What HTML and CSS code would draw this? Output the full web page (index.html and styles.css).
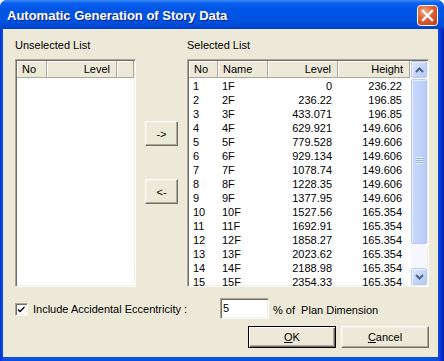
FILE: index.html
```html
<!DOCTYPE html>
<html lang="en">
<head>
  <meta charset="UTF-8">
  <title>Automatic Generation of Story Data</title>
  <link rel="stylesheet" href="styles.css">
</head>
<body>

  <div class="window">
    <!-- Title bar -->
    <div class="titlebar">
      <span class="title">Automatic Generation of Story Data</span>
      <button class="close-btn" aria-label="Close">
        <svg width="21" height="21" viewBox="0 0 21 21">
          <defs>
            <radialGradient id="closeFill" cx="35%" cy="30%" r="80%">
              <stop offset="0" stop-color="#f0a88a"/>
              <stop offset="0.45" stop-color="#e0673c"/>
              <stop offset="1" stop-color="#c0421c"/>
            </radialGradient>
          </defs>
          <rect x="0.5" y="0.5" width="20" height="20" rx="3" fill="url(#closeFill)" stroke="#ffffff"/>
          <path d="M6 6 L15 15 M15 6 L6 15" stroke="#ffffff" stroke-width="2.4" stroke-linecap="square"/>
        </svg>
      </button>
    </div>

    <div class="client">
      <div class="lists">
        <!-- Unselected list -->
        <div class="group group-unselected">
          <div class="group-label">Unselected List</div>
          <div class="listbox">
            <div class="list-head cols-un">
              <div class="hcell">No</div>
              <div class="hcell right">Level</div>
              <div class="hcell"></div>
            </div>
          </div>
        </div>

        <!-- Move buttons -->
        <div class="movers">
          <button class="btn move-btn">-&gt;</button>
          <button class="btn move-btn">&lt;-</button>
        </div>

        <!-- Selected list -->
        <div class="group group-selected">
          <div class="group-label">Selected List</div>
          <div class="listbox">
            <div class="list-inner">
              <div class="list-main">
                <div class="list-head cols-sel">
                  <div class="hcell">No</div>
                  <div class="hcell">Name</div>
                  <div class="hcell right">Level</div>
                  <div class="hcell right">Height</div>
                </div>
                <div class="rows">
                  <div class="row cols-sel"><span>1</span><span>1F</span><span class="right">0</span><span class="right">236.22</span></div>
                  <div class="row cols-sel"><span>2</span><span>2F</span><span class="right">236.22</span><span class="right">196.85</span></div>
                  <div class="row cols-sel"><span>3</span><span>3F</span><span class="right">433.071</span><span class="right">196.85</span></div>
                  <div class="row cols-sel"><span>4</span><span>4F</span><span class="right">629.921</span><span class="right">149.606</span></div>
                  <div class="row cols-sel"><span>5</span><span>5F</span><span class="right">779.528</span><span class="right">149.606</span></div>
                  <div class="row cols-sel"><span>6</span><span>6F</span><span class="right">929.134</span><span class="right">149.606</span></div>
                  <div class="row cols-sel"><span>7</span><span>7F</span><span class="right">1078.74</span><span class="right">149.606</span></div>
                  <div class="row cols-sel"><span>8</span><span>8F</span><span class="right">1228.35</span><span class="right">149.606</span></div>
                  <div class="row cols-sel"><span>9</span><span>9F</span><span class="right">1377.95</span><span class="right">149.606</span></div>
                  <div class="row cols-sel"><span>10</span><span>10F</span><span class="right">1527.56</span><span class="right">165.354</span></div>
                  <div class="row cols-sel"><span>11</span><span>11F</span><span class="right">1692.91</span><span class="right">165.354</span></div>
                  <div class="row cols-sel"><span>12</span><span>12F</span><span class="right">1858.27</span><span class="right">165.354</span></div>
                  <div class="row cols-sel"><span>13</span><span>13F</span><span class="right">2023.62</span><span class="right">165.354</span></div>
                  <div class="row cols-sel"><span>14</span><span>14F</span><span class="right">2188.98</span><span class="right">165.354</span></div>
                  <div class="row cols-sel"><span>15</span><span>15F</span><span class="right">2354.33</span><span class="right">165.354</span></div>
                </div>
              </div>

              <!-- XP style scrollbar -->
              <div class="scrollbar">
                <div class="sb-btn">
                  <svg width="9" height="6" viewBox="0 0 9 6"><path d="M1 5 L4.5 1.5 L8 5" fill="none" stroke="#4d6185" stroke-width="2"/></svg>
                </div>
                <div class="sb-thumb">
                  <div class="grip"></div>
                </div>
                <div class="sb-track"></div>
                <div class="sb-btn">
                  <svg width="9" height="6" viewBox="0 0 9 6"><path d="M1 1 L4.5 4.5 L8 1" fill="none" stroke="#4d6185" stroke-width="2"/></svg>
                </div>
              </div>
            </div>
          </div>
        </div>
      </div>

      <!-- Eccentricity option -->
      <div class="options">
        <span class="checkbox">
          <svg width="9" height="9" viewBox="0 0 9 9"><path d="M1 3.5 L3 5.5 L7.5 1 L7.5 3 L3 7.5 L1 5.5 Z" fill="#000"/></svg>
        </span>
        <span class="check-label">Include Accidental Eccentricity :</span>
        <span class="textbox">5</span>
        <span class="unit">% of&nbsp; Plan Dimension</span>
      </div>

      <!-- Dialog buttons -->
      <div class="actions">
        <button class="btn action-btn default-btn"><u>O</u>K</button>
        <button class="btn action-btn"><u>C</u>ancel</button>
      </div>
    </div>
  </div>

</body>
</html>
```

FILE: styles.css
```css
/* Reset and basic styles */
* {
  margin: 0;
  padding: 0;
  box-sizing: border-box;
}

body {
  width: 444px;
  height: 361px;
  overflow: hidden;
  background: #ffffff;
  font-family: "Liberation Sans", Arial, sans-serif;
  font-size: 11px;
  color: #000;
}

/* Window frame */
.window {
  width: 444px;
  height: 361px;
  display: flex;
  flex-direction: column;
  background: linear-gradient(to right, #0831d9, #0a4fe0 3px, #0a4fe0 438px, #0831d9 441px, #001ea0);
  border-radius: 7px 7px 0 0;
  overflow: hidden;
}

.titlebar {
  height: 29px;
  display: flex;
  align-items: center;
  justify-content: space-between;
  padding: 0 6px 0 7px;
  background: linear-gradient(to bottom, #3f8cf3 0, #0a61f0 3px, #0055e5 9px, #0053e1 20px, #0049d6 26px, #003fc8 29px);
}

.title {
  color: #fff;
  font-weight: bold;
  font-size: 13px;
  text-shadow: 1px 1px #0f1e89;
  margin-top: 1px;
}

.close-btn {
  width: 21px;
  height: 21px;
  border: none;
  background: none;
  display: flex;
  margin-top: 1px;
}

/* Dialog body */
.client {
  flex: 1;
  margin: 0 6px 4px 3px;
  background: #ece9d8;
  display: flex;
  flex-direction: column;
  padding-top: 10px;
}

.lists {
  display: flex;
  gap: 9px;
  padding-left: 12px;
}

.group-label {
  height: 13px;
  line-height: 13px;
  margin-bottom: 7px;
}

.group-unselected { width: 121px; }
.group-selected { width: 242px; }

.listbox {
  height: 228px;
  background: #fff;
  border: 1px solid;
  border-color: #aca899 #fff #fff #aca899;
  box-shadow: inset 1px 1px #716f64, inset -1px -1px #f1efe2;
  padding: 1px;
  overflow: hidden;
}

.list-head {
  height: 17px;
  display: grid;
  background: #ece9d8;
  border-bottom: 1px solid #aca899;
}

.hcell {
  line-height: 16px;
  padding: 0 6px 0 5px;
  border-right: 1px solid #aca899;
  box-shadow: inset 1px 1px #fff;
  white-space: nowrap;
}

.right { text-align: right; }

.cols-un { grid-template-columns: 30px 70px 1fr; }
.cols-sel { grid-template-columns: 29px 50px 70px 72px; }

.list-inner {
  display: flex;
  height: 100%;
}

.list-main {
  width: 221px;
}

.rows {
  padding-top: 1px;
}

.row {
  display: grid;
  height: 14px;
  line-height: 14px;
}

.row span {
  padding: 0 6px 0 4px;
  white-space: nowrap;
}

.row span:last-child {
  padding-right: 8px;
}

/* Scrollbar */
.scrollbar {
  width: 17px;
  padding-left: 1px;
  display: flex;
  flex-direction: column;
  background: #fefefe;
}

.sb-btn {
  height: 17px;
  border: 1px solid #b9cbf3;
  border-radius: 2px;
  background: linear-gradient(to bottom right, #dbe5fd, #c1d3fb 60%, #b5c8f5);
  box-shadow: inset 1px 1px #eef3ff;
  display: flex;
  align-items: center;
  justify-content: center;
}

.sb-thumb {
  height: 165px;
  margin: 1px 0 0;
  border: 1px solid #b5c8f6;
  border-radius: 2px;
  background: linear-gradient(to right, #c9d8fc, #c1d3fb 50%, #b8cbf7);
  box-shadow: inset 1px 1px #e4ecfe;
  display: flex;
  align-items: center;
  justify-content: center;
}

.grip {
  width: 7px;
  height: 7px;
  background: repeating-linear-gradient(to bottom, #eef4fe 0, #eef4fe 1px, #8cb0f8 1px, #8cb0f8 2px);
  margin-top: -2px;
}

.sb-track {
  flex: 1;
  background: #f6f7fc;
}

/* Buttons (classic bevel) */
.btn {
  font-family: inherit;
  font-size: 11px;
  color: #000;
  background: #ece9d8;
  border: 1px solid;
  border-color: #fff #716f64 #716f64 #fff;
  box-shadow: inset -1px -1px #aca899, inset 1px 1px #f1efe2;
}

.movers {
  width: 33px;
  display: flex;
  flex-direction: column;
  gap: 33px;
  padding-top: 82px;
}

.move-btn {
  height: 25px;
}

/* Options row */
.options {
  display: flex;
  align-items: center;
  height: 21px;
  margin-top: 11px;
  padding-left: 12px;
}

.checkbox {
  width: 13px;
  height: 13px;
  margin-top: 1px;
  background: #fff;
  border: 1px solid;
  border-color: #aca899 #fff #fff #aca899;
  box-shadow: inset 1px 1px #716f64, inset -1px -1px #f1efe2;
  display: flex;
  align-items: center;
  justify-content: center;
}

.check-label {
  width: 192px;
  padding-left: 5px;
}

.textbox {
  width: 49px;
  height: 21px;
  line-height: 19px;
  padding-left: 2px;
  background: #fff;
  border: 1px solid;
  border-color: #aca899 #fff #fff #aca899;
  box-shadow: inset 1px 1px #716f64, inset -1px -1px #f1efe2;
}

.unit {
  padding-left: 4px;
  margin-top: 2px;
}

/* Dialog buttons */
.actions {
  display: flex;
  justify-content: flex-end;
  gap: 5px;
  margin-top: 7px;
  padding-right: 9px;
}

.action-btn {
  width: 88px;
  height: 22px;
}

.default-btn {
  border: 1px solid #000;
  box-shadow: inset 1px 1px #fff, inset -1px -1px #716f64, inset -2px -2px #aca899;
}
```
